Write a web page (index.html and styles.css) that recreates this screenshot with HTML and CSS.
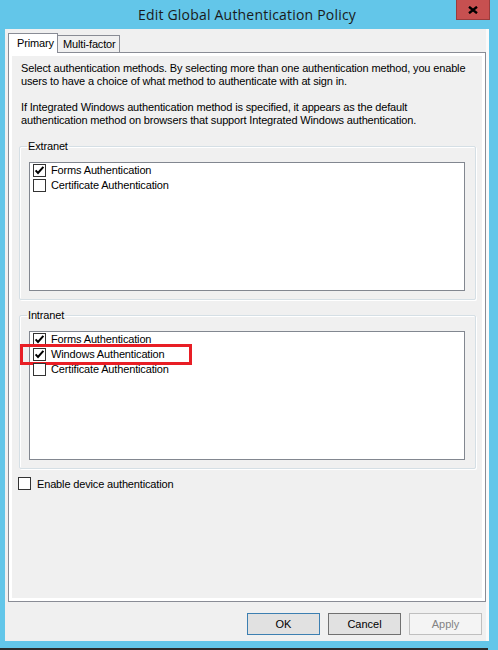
FILE: index.html
```html
<!DOCTYPE html>
<html lang="en">
<head>
    <meta charset="UTF-8">
    <title>Edit Global Authentication Policy</title>
    <link rel="stylesheet" href="styles.css">
</head>
<body>
    <div class="window">
        <div class="titlebar">
            <span class="title">Edit Global Authentication Policy</span>
            <button class="close" title="Close">
                <svg width="10" height="8" viewBox="0 0 10 8"><path d="M1 0.8 L9 7.2 M9 0.8 L1 7.2" stroke="#000" stroke-width="2.4"/></svg>
            </button>
        </div>
        <div class="client">
            <div class="tabstrip">
                <div class="tab active">Primary</div>
                <div class="tab">Multi-factor</div>
            </div>
            <div class="tabpanel">
                <div class="page">
                    <p class="intro">Select authentication methods. By selecting more than one authentication method, you enable<br>users to have a choice of what method to authenticate with at sign in.</p>
                    <p class="intro">If Integrated Windows authentication method is specified, it appears as the default<br>authentication method on browsers that support Integrated Windows authentication.</p>

                    <fieldset class="group">
                        <legend>Extranet</legend>
                        <div class="list">
                            <label class="item"><span class="check on"><svg width="11" height="11" viewBox="0 0 11 11"><path d="M1.6 5.4 L4 8 L9.4 1.8" fill="none" stroke="#000" stroke-width="2"/></svg></span>Forms Authentication</label>
                            <label class="item"><span class="check"></span>Certificate Authentication</label>
                        </div>
                    </fieldset>

                    <fieldset class="group">
                        <legend>Intranet</legend>
                        <div class="list">
                            <label class="item"><span class="check on"><svg width="11" height="11" viewBox="0 0 11 11"><path d="M1.6 5.4 L4 8 L9.4 1.8" fill="none" stroke="#000" stroke-width="2"/></svg></span>Forms Authentication</label>
                            <label class="item marked"><span class="check on"><svg width="11" height="11" viewBox="0 0 11 11"><path d="M1.6 5.4 L4 8 L9.4 1.8" fill="none" stroke="#000" stroke-width="2"/></svg></span>Windows Authentication</label>
                            <label class="item"><span class="check"></span>Certificate Authentication</label>
                        </div>
                    </fieldset>

                    <label class="option"><span class="check"></span>Enable device authentication</label>
                </div>
            </div>
            <div class="buttons">
                <button class="btn default">OK</button>
                <button class="btn cancel">Cancel</button>
                <button class="btn" disabled>Apply</button>
            </div>
        </div>
    </div>
    <div class="bottom-line"></div>
</body>
</html>
```

FILE: styles.css
```css
* {
    margin: 0;
    padding: 0;
    box-sizing: border-box;
}
body {
    width: 498px;
    height: 650px;
    overflow: hidden;
    background-color: #63c6e9;
    font-family: 'Liberation Sans', Arial, sans-serif;
    font-size: 11px;
    letter-spacing: -0.15px;
    color: #000;
}
.window {
    margin-left: 5px;
    width: 484px;
    height: 641px;
    display: flex;
    flex-direction: column;
}
.titlebar {
    position: relative;
    height: 29px;
    display: flex;
    align-items: center;
    justify-content: center;
}
.title {
    font-family: 'Open Sans', sans-serif;
    font-size: 14px;
    letter-spacing: 0.2px;
    color: #1a1a1a;
}
.close {
    position: absolute;
    top: 0;
    right: -1px;
    width: 34px;
    height: 20px;
    background-color: #c75050;
    border: 1px solid #9a3c3c;
    border-top: none;
    display: flex;
    align-items: center;
    justify-content: center;
}
.client {
    flex: 1;
    display: flex;
    flex-direction: column;
    background-color: #f0f0f0;
    border-right: 3px solid #fafafa;
    padding: 4px 0 0 3px;
}
.tabstrip {
    display: flex;
    align-items: flex-end;
    height: 19px;
}
.tab {
    height: 17px;
    width: 62px;
    padding: 2px 0 0 5px;
    line-height: 13px;
    border: 1px solid #898c95;
    border-bottom: none;
    border-left: none;
    background-color: #f0f0f0;
}
.tab.active {
    position: relative;
    z-index: 1;
    width: 50px;
    height: 20px;
    margin-bottom: -1px;
    padding: 3px 0 0 8px;
    border-left: 1px solid #898c95;
    background-color: #fff;
}
.tabpanel {
    height: 550px;
    border: 1px solid #898c95;
    background-color: #fff;
    padding: 3px;
}
.page {
    height: 100%;
    background-color: #f0f0f0;
    padding-top: 6px;
}
.intro {
    padding-left: 9px;
    line-height: 13px;
    margin-bottom: 13px;
}
.intro + .intro {
    margin-bottom: 12px;
}
.group {
    margin: 0 6px 8px 7px;
    border: 1px solid #d5dfe5;
    box-shadow: inset 1px 1px 0 #fff, 1px 1px 0 #fff;
    border-radius: 2px;
    padding: 9px 10px 8px 9px;
}
.group legend {
    margin-left: -2px;
    padding: 0 1px;
    line-height: 14px;
}
.list {
    height: 129px;
    background-color: #fff;
    border: 1px solid #828790;
    padding: 0 3px;
}
.item {
    position: relative;
    display: flex;
    align-items: center;
    height: 15px;
    line-height: 15px;
}
.check {
    width: 13px;
    height: 13px;
    flex-shrink: 0;
    border: 1px solid #333;
    background-color: #fff;
    margin-right: 5px;
    display: flex;
}
.item.marked::after {
    content: '';
    position: absolute;
    box-sizing: border-box;
    left: -13px;
    top: -3px;
    width: 172px;
    height: 21px;
    border: 3px solid #e81e25;
}
.option {
    display: flex;
    align-items: center;
    height: 15px;
    margin: -1px 0 0 6px;
}
.option .check {
    margin-right: 6px;
}
.buttons {
    display: flex;
    justify-content: flex-end;
    gap: 8px;
    padding: 11px 4px 0 0;
}
.btn {
    width: 73px;
    height: 22px;
    font-family: 'Liberation Sans', Arial, sans-serif;
    font-size: 11px;
    color: #000;
    background-color: #e1e1e1;
    border: 1px solid #adadad;
}
.btn.default {
    border-color: #3c7fb1;
}
.btn.cancel {
    border-color: #707070;
}
.btn:disabled {
    background-color: #f4f4f4;
    border-color: #bfbfbf;
    color: #838383;
}
.bottom-line {
    margin-top: 7px;
    width: 488px;
    height: 2px;
    background-color: #2b2b2b;
}
```
